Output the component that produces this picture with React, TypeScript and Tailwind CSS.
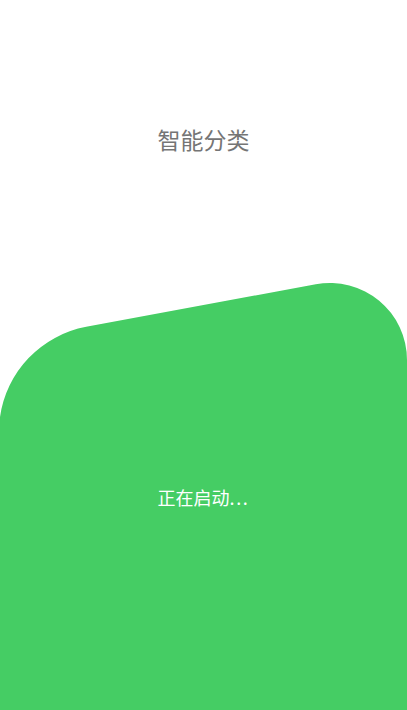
export default function App() {
  return (
    <div className="w-[407px] h-[710px] bg-white overflow-hidden flex flex-col">
      {/* Title */}
      <div className="h-[280px] pt-[124px] text-center">
        <h1 className="text-[23px] leading-[30px] text-[#757575] font-['Noto_Sans_CJK_SC',sans-serif]">
          智能分类
        </h1>
      </div>

      {/* Green launch panel */}
      <div className="relative flex-1">
        <svg
          className="absolute inset-0"
          width="407"
          height="430"
          viewBox="0 0 407 430"
        >
          <path
            d="M0,430 L0,137 A107,107 0 0 1 86.2,46.8 L315.8,4.3 A77,77 0 0 1 407,80 L408,80 L408,430 Z"
            fill="#45cd64"
          />
        </svg>
        <div className="relative pt-[205px] text-center">
          <span className="text-[18px] leading-[24px] text-white font-['Noto_Sans_CJK_SC',sans-serif]">
            正在启动<span className="tracking-[1.6px]">...</span>
          </span>
        </div>
      </div>
    </div>
  )
}
